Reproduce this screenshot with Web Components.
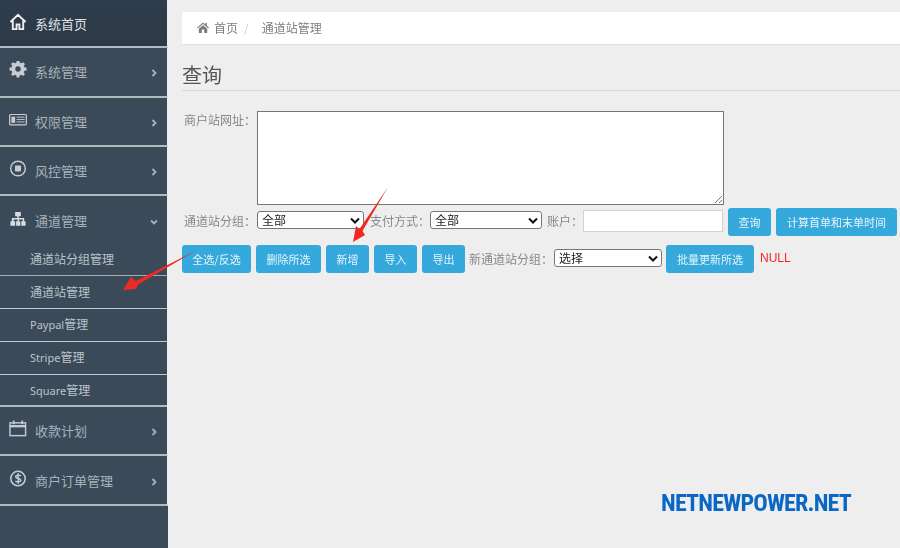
<!DOCTYPE html>
<html><head><meta charset="utf-8">
<style>
html,body{margin:0;padding:0;height:100%}
body{width:900px;height:548px;overflow:hidden;background:#eee;font-family:"Open Sans","Noto Sans CJK SC",sans-serif}
app-shell{height:548px;filter:blur(.35px)}
sub-item span{font-size:11px}
</style></head><body>
<template id="t-nav">
<style>
:host{display:block;--c:#a9b3bb;color:var(--c);border-bottom:2px solid #b3bac0;border-right:1px solid #eee;box-sizing:border-box;height:49.33px}
:host([first]){height:48.3px;background:linear-gradient(#2f3c4b,#2d3947);--c:#dfe3e6}
:host([open]){height:auto;border-bottom:0}
:host([low]) .row{padding-top:1px}
.row{height:47px;display:flex;align-items:center;padding:0 9px 0 9px;gap:8px;font:13px/1 "Noto Sans CJK SC",sans-serif;box-sizing:border-box}
:host([open]) .row{padding-top:1px}
.ic{width:18px;height:18px;flex:none;display:flex;margin-top:-3px}
.ic ::slotted(svg){width:18px;height:18px}
.tx{flex:1}
.ar{width:8px;height:8px;flex:none;margin-top:3px}
</style>
<div class="row"><span class="ic"><slot name="icon"></slot></span><span class="tx"><slot name="label"></slot></span><svg class="ar" viewBox="0 0 8 8" fill="none" stroke="currentColor" stroke-width="1.800"><path class="p" d="M2.500 1 5.500 4 2.500 7"/></svg></div>
<slot></slot>
</template>
<template id="t-sub">
<style>:host{display:block;height:33px;box-sizing:border-box;padding-left:30px;border-bottom:1px solid #c2c8cd;color:#bcc4ca;font:12px/32px "Noto Sans","Noto Sans CJK SC",sans-serif}
:host([first]){height:32.500px;border-bottom-color:#a4adb4}
:host([nudge]){padding-top:1px;line-height:31px}
:host([last]){height:32.200px;border-bottom:2px solid #b3bac0}</style><slot></slot>
</template>
<template id="t-btn">
<style>:host{display:inline-flex;align-items:center;justify-content:center;height:28px;background:#35a9dc;color:#e6f4fa;border-radius:3px;font:11px/1 "Noto Sans CJK SC",sans-serif;box-sizing:border-box;flex:none;white-space:nowrap}</style><slot></slot>
</template>
<template id="t-sel">
<style>:host{display:inline-flex;align-items:center;justify-content:space-between;box-sizing:border-box;height:18px;background:#fff;border:1px solid #767676;border-radius:3px;padding:0 3px 0 4px;font:12px/1 "Noto Sans CJK SC",sans-serif;color:#222;flex:none}
svg{width:10px;height:7px}</style><span><slot></slot></span><svg viewBox="0 0 10 7" fill="none" stroke="#111" stroke-width="2"><path d="M1 1.500 5 5.500 9 1.500"/></svg>
</template>
<template id="t-main">
<style>
:host{display:block;flex:1;padding:12px 0 0 14px;font:12px "Noto Sans CJK SC",sans-serif;color:#888;min-width:0}
.crumb{height:32px;background:#fff;display:flex;align-items:center;padding:0 0 2px 15px;box-sizing:border-box;font-size:12px;color:#7d7d7d;box-shadow:0 1px 1px #e0e0e0}
.crumb svg{width:12px;height:11px;margin-right:5px}
.crumb i{font-style:normal;color:#ccc;margin:0 13px 0 6px}
h2{margin:17px 0 0;height:29px;font:400 20px/28px "Noto Sans CJK SC",sans-serif;color:#555;border-bottom:1px solid #d8d8d8;box-sizing:content-box}
.f1{display:flex;margin-top:20px;padding-left:2px;gap:1px}
.ta{width:467px;height:94px;box-sizing:border-box;background:#fff;border:1px solid #767676;position:relative}
.ta svg{position:absolute;right:0;bottom:0;width:10px;height:10px}
.f2{display:flex;align-items:center;margin-top:3px;height:28px;padding-left:2px}
.f2 .lbl,.f2 x-sel{margin-bottom:4px}
.inp{width:140px;height:22px;box-sizing:border-box;border:1px solid #d2d2d2;background:#fff;flex:none;margin:0 5px 2px 0}
.f3{display:flex;align-items:center;margin-top:9px;gap:5px}
.f3 x-sel{margin-bottom:2px}
.f3 .lbl{margin-bottom:2px}
.null{color:#f8232f;font:12px "Liberation Sans",sans-serif;margin-left:1px;margin-top:-3px}
.lbl{flex:none}
.mark{position:absolute;left:661px;top:491px;font:700 24px/1 "Roboto Condensed","Liberation Sans Narrow","DejaVu Sans Condensed",sans-serif;letter-spacing:-.8px;color:#0a67c5;white-space:nowrap}
svg.arrows{position:absolute;left:0;top:0;width:900px;height:548px;pointer-events:none}
</style>
<div class="crumb"><svg viewBox="0 0 12 11" fill="#7b7b7b"><path d="M6 .5 0 5.700l.7.800L6 2l5.300 4.500.7-.8L9.800 3.800V1H8.300v1.500zM1.800 6.700V11h3V7.500h2.400V11h3V6.700L6 3.200z"/></svg><span>首页</span><i>/</i><span>通道站管理</span></div>
<h2>查询</h2>
<div class="f1"><span class="lbl">商户站网址：</span><div class="ta"><svg viewBox="0 0 10 10" stroke="#777" fill="none"><path d="M9 2 2 9M9 6 6 9"/></svg></div></div>
<div class="f2"><span class="lbl" style="margin-right:1px">通道站分组：</span><x-sel style="width:107px">全部</x-sel><span class="lbl" style="margin-left:6px">支付方式：</span><x-sel style="width:112px">全部</x-sel><span class="lbl" style="margin-left:5px">账户：</span><div class="inp"></div><x-btn style="width:43px">查询</x-btn><x-btn style="width:121px;margin-left:5px">计算首单和末单时间</x-btn></div>
<div class="f3"><x-btn style="width:69px">全选/反选</x-btn><x-btn style="width:65px">删除所选</x-btn><x-btn style="width:43px">新增</x-btn><x-btn style="width:43px">导入</x-btn><x-btn style="width:43px">导出</x-btn><span class="lbl" style="margin-left:-1px;margin-right:-4px">新通道站分组：</span><x-sel style="width:108px">选择</x-sel><x-btn style="width:88px;margin-left:-1px">批量更新所选</x-btn><span class="null">NULL</span></div>
<div class="mark">NETNEWPOWER.NET</div>
<svg class="arrows" viewBox="0 0 900 548"><path d="M197 250 138 284.500 136 289 123 290 131 277 136 281z" fill="#ee2a24"/><path d="M388 187 362.500 231 365 235 353 242 356 226 359.500 229z" fill="#ee2a24"/></svg>
</template>
<template id="t-shell"><style>:host{display:flex;width:900px}
.side{width:168px;height:548px;flex:none;background:#3b4a59}</style><div class="side"><slot name="side"></slot></div><slot></slot></template>

<app-shell>
<div slot="side">
<nav-item first noarrow>
<svg slot="icon" viewBox="0 0 19 19" fill="none" stroke="#eef1f3" stroke-width="2"><path d="M1.500 9.500 9.500 2l8 7.500M4 8v9h4v-5h3v5h4V8"/></svg><span slot="label">系统首页</span></nav-item>
<nav-item><svg slot="icon" viewBox="0 0 19 19"><path fill="#c6ccd1" fill-rule="evenodd" d="M8 1h3l.5 2.500 1.500.7 2.200-1.300 2 2-1.300 2.200.7 1.400 2.400.5v3l-2.400.5-.7 1.500 1.300 2.200-2 2-2.200-1.400-1.500.7-.5 2.500H8l-.5-2.500-1.500-.7-2.200 1.400-2-2 1.300-2.200-.7-1.500L0 12V9l2.400-.5.7-1.400-1.300-2.200 2-2L6 4.200l1.500-.7zM9.500 7.500a3 3 0 1 0 0 6 3 3 0 0 0 0-6z" transform="translate(.5 -1.500) scale(.95)"/></svg><span slot="label">系统管理</span></nav-item>
<nav-item><svg slot="icon" viewBox="0 0 19 19"><g fill="none" stroke="#c6ccd1"><rect x=".7" y="3.700" width="17.600" height="11" rx="1" stroke-width="1.300"/></g><rect x="2.500" y="6" width="4" height="6.500" fill="#c6ccd1"/><path stroke="#c6ccd1" d="M8 6.500h8.500M8 9h8.500M8 11.500h8.500"/></svg><span slot="label">权限管理</span></nav-item>
<nav-item><svg slot="icon" viewBox="0 0 19 19"><circle cx="9.500" cy="9" r="7.700" fill="none" stroke="#c6ccd1" stroke-width="1.500"/><rect x="6.300" y="5.800" width="6.400" height="6.400" rx="1" fill="#c6ccd1"/></svg><span slot="label">风控管理</span></nav-item>
<nav-item open><svg slot="icon" viewBox="0 0 19 19" fill="#d6dbdf"><path d="M6.500 2h6v4.500h-2.200V8.500h5.700V12h1.500v4.500h-4.500V12h1.500V10h-4v2h1.500v4.500H7.500V12h1.500v-2h-4v2h1.500v4.500H1.500V12H3V8.500h5.700V6.500H6.500z"/></svg><span slot="label">通道管理</span>
<sub-item first nudge>通道站分组管理</sub-item><sub-item nudge>通道站管理</sub-item><sub-item><span>Paypal</span>管理</sub-item><sub-item><span>Stripe</span>管理</sub-item><sub-item last><span>Square</span>管理</sub-item></nav-item>
<nav-item low><svg slot="icon" viewBox="0 0 19 19" fill="none" stroke="#c6ccd1" stroke-width="1.500"><rect x="1" y="3" width="16.500" height="13.500"/><path d="M1 6.500h16.500" stroke-width="2.500"/><path d="M5 .5v4M14 .5v4" stroke-width="1.800"/></svg><span slot="label">收款计划</span></nav-item>
<nav-item low><svg slot="icon" viewBox="0 0 19 19"><circle cx="9.500" cy="9" r="7.600" fill="none" stroke="#c6ccd1" stroke-width="1.600"/><path fill="none" stroke="#c6ccd1" stroke-width="1.500" d="M12.500 6.500C11.500 5 7 5 7 7.200c0 2.300 5.500 1.300 5.500 3.700C12.500 13 8 13 6.800 11.500M9.700 3.500v11"/></svg><span slot="label">商户订单管理</span></nav-item>
</div>
<main-view></main-view>
</app-shell>
<script>
function mk(name,id,after){customElements.define(name,class extends HTMLElement{constructor(){super();const r=this.attachShadow({mode:'open'});r.appendChild(document.getElementById(id).content.cloneNode(true));}connectedCallback(){after&&after(this)}})}
mk('x-btn','t-btn');mk('x-sel','t-sel');mk('sub-item','t-sub');mk('main-view','t-main');mk('app-shell','t-shell');
mk('nav-item','t-nav',el=>{const a=el.shadowRoot.querySelector('.ar');if(el.hasAttribute('noarrow'))a.style.visibility='hidden';if(el.hasAttribute('open'))a.querySelector('.p').setAttribute('d','M1 2.500 4 5.500 7 2.500')});
</script>
</body></html>
